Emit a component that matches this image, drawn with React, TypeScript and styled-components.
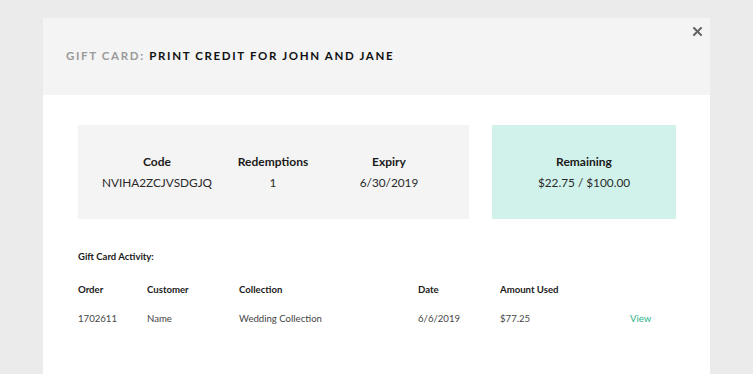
import React from "react";
import styled, { createGlobalStyle } from "styled-components";

const GlobalStyle = createGlobalStyle`
  html, body {
    margin: 0;
    padding: 0;
    background: #ebebeb;
    font-family: Lato, "Open Sans", sans-serif;
    color: #1a1a1a;
  }
`;

const Page = styled.div`
  height: 374px;
  overflow: hidden;
  padding: 18px 43px 0 43px;
`;

const Modal = styled.div`
  position: relative;
  background: #ffffff;
  height: 356px;
`;

const Header = styled.div`
  height: 77px;
  background: #f4f4f4;
  display: flex;
  align-items: center;
  padding-left: 23px;
`;

const Title = styled.h1`
  margin: 0 0 2px 0;
  font-size: 11.5px;
  font-weight: 700;
  letter-spacing: 1.65px;
  text-transform: uppercase;
  color: #111;
`;

const TitleLabel = styled.span`
  color: #9a9a9a;
`;

const CloseButton = styled.button`
  position: absolute;
  top: 2px;
  right: 2px;
  width: 22px;
  height: 22px;
  border: 0;
  padding: 0;
  background: transparent;
  display: flex;
  align-items: center;
  justify-content: center;
  cursor: pointer;
`;

const Body = styled.div`
  padding: 30px 34px 0 35px;
`;

const Stats = styled.div`
  display: flex;
  gap: 23px;
  height: 94px;
`;

const StatsBox = styled.div<{ tone: "grey" | "mint" }>`
  background: ${({ tone }) => (tone === "mint" ? "#d1f2ea" : "#f4f4f4")};
  display: ${({ tone }) => (tone === "mint" ? "flex" : "grid")};
  grid-template-columns: repeat(3, 116px);
  padding: ${({ tone }) => (tone === "mint" ? "0" : "0 0 0 21px")};
  justify-content: ${({ tone }) => (tone === "mint" ? "center" : "start")};
  align-items: center;
  box-sizing: border-box;
  width: ${({ tone }) => (tone === "mint" ? "184px" : "391px")};
`;

const Stat = styled.div`
  display: flex;
  flex-direction: column;
  align-items: center;
  gap: 6px;
  margin-top: -1px;
`;

const StatLabel = styled.div`
  font-size: 12px;
  font-weight: 700;
  color: #1a1a1a;
  line-height: 15px;
`;

const StatValue = styled.div`
  font-size: 11.8px;
  font-weight: 400;
  color: #2a2a2a;
  line-height: 15px;
`;

const SectionTitle = styled.h2`
  margin: 32px 0 0 0;
  font-size: 9.5px;
  font-weight: 700;
  color: #1a1a1a;
  line-height: 12px;
`;

const Table = styled.div`
  margin-top: 21px;
  display: flex;
  flex-direction: column;
  gap: 17px;
`;

const TableRow = styled.div<{ head?: boolean }>`
  display: grid;
  grid-template-columns: 69px 92px 179px 82px 130px 1fr;
  font-size: 9.6px;
  line-height: 12px;
  font-weight: ${({ head }) => (head ? 700 : 400)};
  color: ${({ head }) => (head ? "#1a1a1a" : "#454545")};
`;

const ViewLink = styled.a`
  color: #2bb58a;
  text-decoration: none;
  cursor: pointer;
`;

const stats = [
  { label: "Code", value: "NVIHA2ZCJVSDGJQ" },
  { label: "Redemptions", value: "1" },
  { label: "Expiry", value: "6/30/2019" },
];

const activity = [
  {
    order: "1702611",
    customer: "Name",
    collection: "Wedding Collection",
    date: "6/6/2019",
    amount: "$77.25",
  },
];

export default function App() {
  return (
    <>
      <GlobalStyle />
      <Page>
        <Modal>
          <Header>
            <Title>
              <TitleLabel>Gift Card:</TitleLabel> Print Credit for John and Jane
            </Title>
          </Header>
          <CloseButton aria-label="Close">
            <svg width="9" height="9" viewBox="0 0 9 9">
              <path
                d="M1 1L8 8M8 1L1 8"
                stroke="#666"
                strokeWidth="2"
                strokeLinecap="square"
              />
            </svg>
          </CloseButton>
          <Body>
            <Stats>
              <StatsBox tone="grey">
                {stats.map((s) => (
                  <Stat key={s.label}>
                    <StatLabel>{s.label}</StatLabel>
                    <StatValue>{s.value}</StatValue>
                  </Stat>
                ))}
              </StatsBox>
              <StatsBox tone="mint">
                <Stat>
                  <StatLabel>Remaining</StatLabel>
                  <StatValue>$22.75 / $100.00</StatValue>
                </Stat>
              </StatsBox>
            </Stats>
            <SectionTitle>Gift Card Activity:</SectionTitle>
            <Table>
              <TableRow head>
                <div>Order</div>
                <div>Customer</div>
                <div>Collection</div>
                <div>Date</div>
                <div>Amount Used</div>
                <div />
              </TableRow>
              {activity.map((a) => (
                <TableRow key={a.order}>
                  <div>{a.order}</div>
                  <div>{a.customer}</div>
                  <div>{a.collection}</div>
                  <div>{a.date}</div>
                  <div>{a.amount}</div>
                  <div>
                    <ViewLink>View</ViewLink>
                  </div>
                </TableRow>
              ))}
            </Table>
          </Body>
        </Modal>
      </Page>
    </>
  );
}
